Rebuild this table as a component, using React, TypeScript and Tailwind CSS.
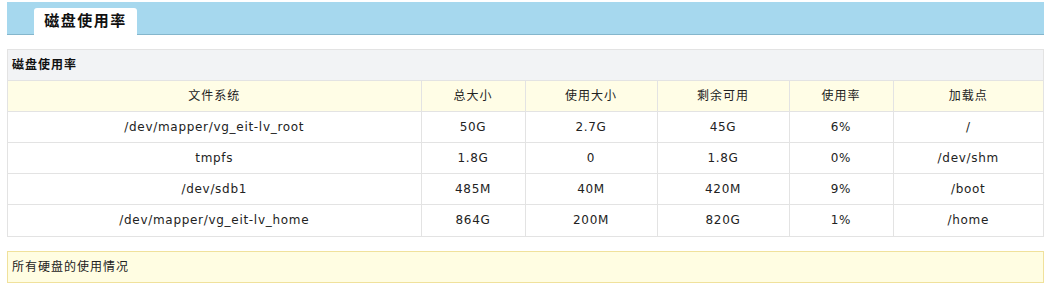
import React from "react";

const rows = [
  ["/dev/mapper/vg_eit-lv_root", "50G", "2.7G", "45G", "6%", "/"],
  ["tmpfs", "1.8G", "0", "1.8G", "0%", "/dev/shm"],
  ["/dev/sdb1", "485M", "40M", "420M", "9%", "/boot"],
  ["/dev/mapper/vg_eit-lv_home", "864G", "200M", "820G", "1%", "/home"],
];
const heads = ["文件系统", "总大小", "使用大小", "剩余可用", "使用率", "加载点"];
const widths = [413, 104, 132, 132, 104, 150];

export default function App() {
  return (
    <div
      className="bg-white text-[12px] text-[#222]"
      style={{ fontFamily: '"DejaVu Sans", "Noto Sans CJK SC", sans-serif' }}
    >
      <div className="ml-[7px] w-[1037px] pt-[2px]">
        <div className="flex h-[33px] items-end border-b border-[#84b6cc] bg-[#a6d8ee] pl-[27px]">
          <div className="-mb-px flex h-[27px] w-[103px] items-center justify-center rounded-t-[3px] bg-white text-[15px] font-bold tracking-[1.5px] text-[#111]">
            磁盘使用率
          </div>
        </div>

        <div className="mt-[14px] border border-[#e3e3e3]">
          <div className="flex h-[30px] items-center bg-[#f2f3f5] pl-[4px] font-bold tracking-[1px] text-[#111]">
            磁盘使用率
          </div>
          <table className="w-full table-fixed border-collapse">
            <colgroup>
              {widths.map((w, i) => (
                <col key={i} style={{ width: w }} />
              ))}
            </colgroup>
            <thead>
              <tr className="h-[31px] bg-[#fffde6]">
                {heads.map((h, i) => (
                  <th
                    key={i}
                    className={`border-t border-[#e3e3e3] p-0 text-center font-normal tracking-[1px] ${i > 0 ? "border-l" : ""}`}
                  >
                    {h}
                  </th>
                ))}
              </tr>
            </thead>
            <tbody>
              {rows.map((r, ri) => (
                <tr key={ri} className="h-[31px]">
                  {r.map((c, ci) => (
                    <td
                      key={ci}
                      className={`border-t border-[#e3e3e3] p-0 text-center tracking-[0.7px] ${ci > 0 ? "border-l" : ""}`}
                    >
                      {c}
                    </td>
                  ))}
                </tr>
              ))}
            </tbody>
          </table>
        </div>

        <div className="mt-[14px] flex h-[32px] items-center border border-[#f0e19c] bg-[#fffde2] pl-[4px] tracking-[1px]">
          所有硬盘的使用情况
        </div>
      </div>
    </div>
  );
}
